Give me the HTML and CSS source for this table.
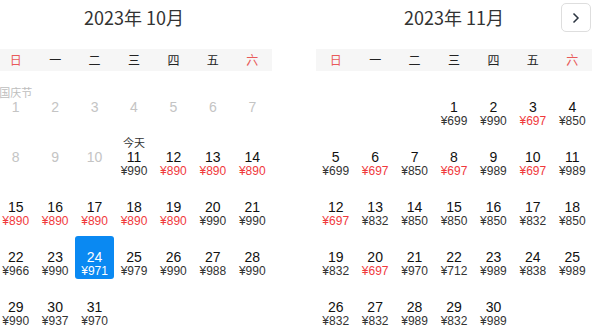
FILE: index.html
```html
<!DOCTYPE html>
<html lang="zh">
<head>
<meta charset="utf-8">
<link rel="stylesheet" href="styles.css">
</head>
<body>
<div class="cals">
  <div class="cal cal-left">
    <div class="title">2023年 10月</div>
    <div class="week">
      <span class="we">日</span><span>一</span><span>二</span><span>三</span><span>四</span><span>五</span><span class="we">六</span>
    </div>
    <div class="days">
      <div class="d off"><span class="lab">国庆节</span><span class="n">1</span></div>
      <div class="d off"><span class="lab"></span><span class="n">2</span></div>
      <div class="d off"><span class="lab"></span><span class="n">3</span></div>
      <div class="d off"><span class="lab"></span><span class="n">4</span></div>
      <div class="d off"><span class="lab"></span><span class="n">5</span></div>
      <div class="d off"><span class="lab"></span><span class="n">6</span></div>
      <div class="d off"><span class="lab"></span><span class="n">7</span></div>

      <div class="d off"><span class="lab"></span><span class="n">8</span></div>
      <div class="d off"><span class="lab"></span><span class="n">9</span></div>
      <div class="d off"><span class="lab"></span><span class="n">10</span></div>
      <div class="d"><span class="lab today">今天</span><span class="n">11</span><span class="p">¥990</span></div>
      <div class="d"><span class="lab"></span><span class="n">12</span><span class="p low">¥890</span></div>
      <div class="d"><span class="lab"></span><span class="n">13</span><span class="p low">¥890</span></div>
      <div class="d"><span class="lab"></span><span class="n">14</span><span class="p low">¥890</span></div>

      <div class="d"><span class="lab"></span><span class="n">15</span><span class="p low">¥890</span></div>
      <div class="d"><span class="lab"></span><span class="n">16</span><span class="p low">¥890</span></div>
      <div class="d"><span class="lab"></span><span class="n">17</span><span class="p low">¥890</span></div>
      <div class="d"><span class="lab"></span><span class="n">18</span><span class="p low">¥890</span></div>
      <div class="d"><span class="lab"></span><span class="n">19</span><span class="p low">¥890</span></div>
      <div class="d"><span class="lab"></span><span class="n">20</span><span class="p">¥990</span></div>
      <div class="d"><span class="lab"></span><span class="n">21</span><span class="p">¥990</span></div>

      <div class="d"><span class="lab"></span><span class="n">22</span><span class="p">¥966</span></div>
      <div class="d"><span class="lab"></span><span class="n">23</span><span class="p">¥990</span></div>
      <div class="d sel"><span class="lab"></span><span class="n">24</span><span class="p">¥971</span></div>
      <div class="d"><span class="lab"></span><span class="n">25</span><span class="p">¥979</span></div>
      <div class="d"><span class="lab"></span><span class="n">26</span><span class="p">¥990</span></div>
      <div class="d"><span class="lab"></span><span class="n">27</span><span class="p">¥988</span></div>
      <div class="d"><span class="lab"></span><span class="n">28</span><span class="p">¥990</span></div>

      <div class="d"><span class="lab"></span><span class="n">29</span><span class="p">¥990</span></div>
      <div class="d"><span class="lab"></span><span class="n">30</span><span class="p">¥937</span></div>
      <div class="d"><span class="lab"></span><span class="n">31</span><span class="p">¥970</span></div>
    </div>
  </div>

  <div class="cal cal-right">
    <div class="title">2023年 11月</div>
    <button class="next" type="button" aria-label="下个月">
      <svg width="8" height="12" viewBox="0 0 8 12"><polyline points="1.5,1.5 6,6 1.5,10.5" fill="none" stroke="#2b3440" stroke-width="1.5"/></svg>
    </button>
    <div class="week">
      <span class="we">日</span><span>一</span><span>二</span><span>三</span><span>四</span><span>五</span><span class="we">六</span>
    </div>
    <div class="days">
      <div class="d empty"></div>
      <div class="d empty"></div>
      <div class="d empty"></div>
      <div class="d"><span class="lab"></span><span class="n">1</span><span class="p">¥699</span></div>
      <div class="d"><span class="lab"></span><span class="n">2</span><span class="p">¥990</span></div>
      <div class="d"><span class="lab"></span><span class="n">3</span><span class="p low">¥697</span></div>
      <div class="d"><span class="lab"></span><span class="n">4</span><span class="p">¥850</span></div>

      <div class="d"><span class="lab"></span><span class="n">5</span><span class="p">¥699</span></div>
      <div class="d"><span class="lab"></span><span class="n">6</span><span class="p low">¥697</span></div>
      <div class="d"><span class="lab"></span><span class="n">7</span><span class="p">¥850</span></div>
      <div class="d"><span class="lab"></span><span class="n">8</span><span class="p low">¥697</span></div>
      <div class="d"><span class="lab"></span><span class="n">9</span><span class="p">¥989</span></div>
      <div class="d"><span class="lab"></span><span class="n">10</span><span class="p low">¥697</span></div>
      <div class="d"><span class="lab"></span><span class="n">11</span><span class="p">¥989</span></div>

      <div class="d"><span class="lab"></span><span class="n">12</span><span class="p low">¥697</span></div>
      <div class="d"><span class="lab"></span><span class="n">13</span><span class="p">¥832</span></div>
      <div class="d"><span class="lab"></span><span class="n">14</span><span class="p">¥850</span></div>
      <div class="d"><span class="lab"></span><span class="n">15</span><span class="p">¥850</span></div>
      <div class="d"><span class="lab"></span><span class="n">16</span><span class="p">¥850</span></div>
      <div class="d"><span class="lab"></span><span class="n">17</span><span class="p">¥832</span></div>
      <div class="d"><span class="lab"></span><span class="n">18</span><span class="p">¥850</span></div>

      <div class="d"><span class="lab"></span><span class="n">19</span><span class="p">¥832</span></div>
      <div class="d"><span class="lab"></span><span class="n">20</span><span class="p low">¥697</span></div>
      <div class="d"><span class="lab"></span><span class="n">21</span><span class="p">¥970</span></div>
      <div class="d"><span class="lab"></span><span class="n">22</span><span class="p">¥712</span></div>
      <div class="d"><span class="lab"></span><span class="n">23</span><span class="p">¥989</span></div>
      <div class="d"><span class="lab"></span><span class="n">24</span><span class="p">¥838</span></div>
      <div class="d"><span class="lab"></span><span class="n">25</span><span class="p">¥989</span></div>

      <div class="d"><span class="lab"></span><span class="n">26</span><span class="p">¥832</span></div>
      <div class="d"><span class="lab"></span><span class="n">27</span><span class="p">¥832</span></div>
      <div class="d"><span class="lab"></span><span class="n">28</span><span class="p">¥989</span></div>
      <div class="d"><span class="lab"></span><span class="n">29</span><span class="p">¥832</span></div>
      <div class="d"><span class="lab"></span><span class="n">30</span><span class="p">¥989</span></div>
    </div>
  </div>
</div>
</body>
</html>
```
FILE: styles.css
```css
html, body {
  margin: 0;
  padding: 0;
  background: #fff;
}
body {
  font-family: "Liberation Sans", "Noto Sans CJK SC", sans-serif;
  color: #111;
  overflow: hidden;
}
.cals {
  display: flex;
  gap: 44px;
  margin-left: -4px;
}
.cal {
  width: 276px;
  flex: none;
  position: relative;
}
.title {
  height: 34px;
  line-height: 34px;
  text-align: center;
  font-family: "Noto Sans CJK SC", sans-serif;
  font-size: 18px;
  color: #333;
}
.next {
  position: absolute;
  right: 1px;
  top: 3px;
  width: 30px;
  height: 29px;
  box-sizing: border-box;
  border: 1px solid #dedede;
  border-radius: 5px;
  background: #fff;
  padding: 0;
  display: flex;
  align-items: center;
  justify-content: center;
}
.week {
  margin-top: 15px;
  height: 22px;
  background: #f6f6f6;
  display: grid;
  grid-template-columns: repeat(7, 1fr);
  font-family: "Noto Sans CJK SC", sans-serif;
  font-size: 12px;
  line-height: 22px;
  text-align: center;
  color: #222;
}
.week .we {
  color: #e85a5a;
}
.days {
  margin-top: 15px;
  display: grid;
  grid-template-columns: repeat(7, 1fr);
  grid-auto-rows: 43px;
  row-gap: 7px;
}
.d {
  display: flex;
  flex-direction: column;
  align-items: center;
  border-radius: 3px;
  white-space: nowrap;
}
.lab {
  height: 12px;
  line-height: 12px;
  font-family: "Noto Sans CJK SC", sans-serif;
  font-size: 11px;
  color: #bdbdbd;
}
.lab.today {
  color: #333;
}
.n {
  margin-top: 2px;
  font-size: 14px;
  line-height: 14px;
  color: #111;
}
.p {
  margin-top: 1px;
  font-size: 12px;
  line-height: 12px;
  color: #333;
}
.p.low {
  color: #f0393c;
}
.off .n {
  color: #c4c4c4;
}
.sel {
  background: #0a89f2;
}
.sel .n,
.sel .p {
  color: #fff;
}
```
